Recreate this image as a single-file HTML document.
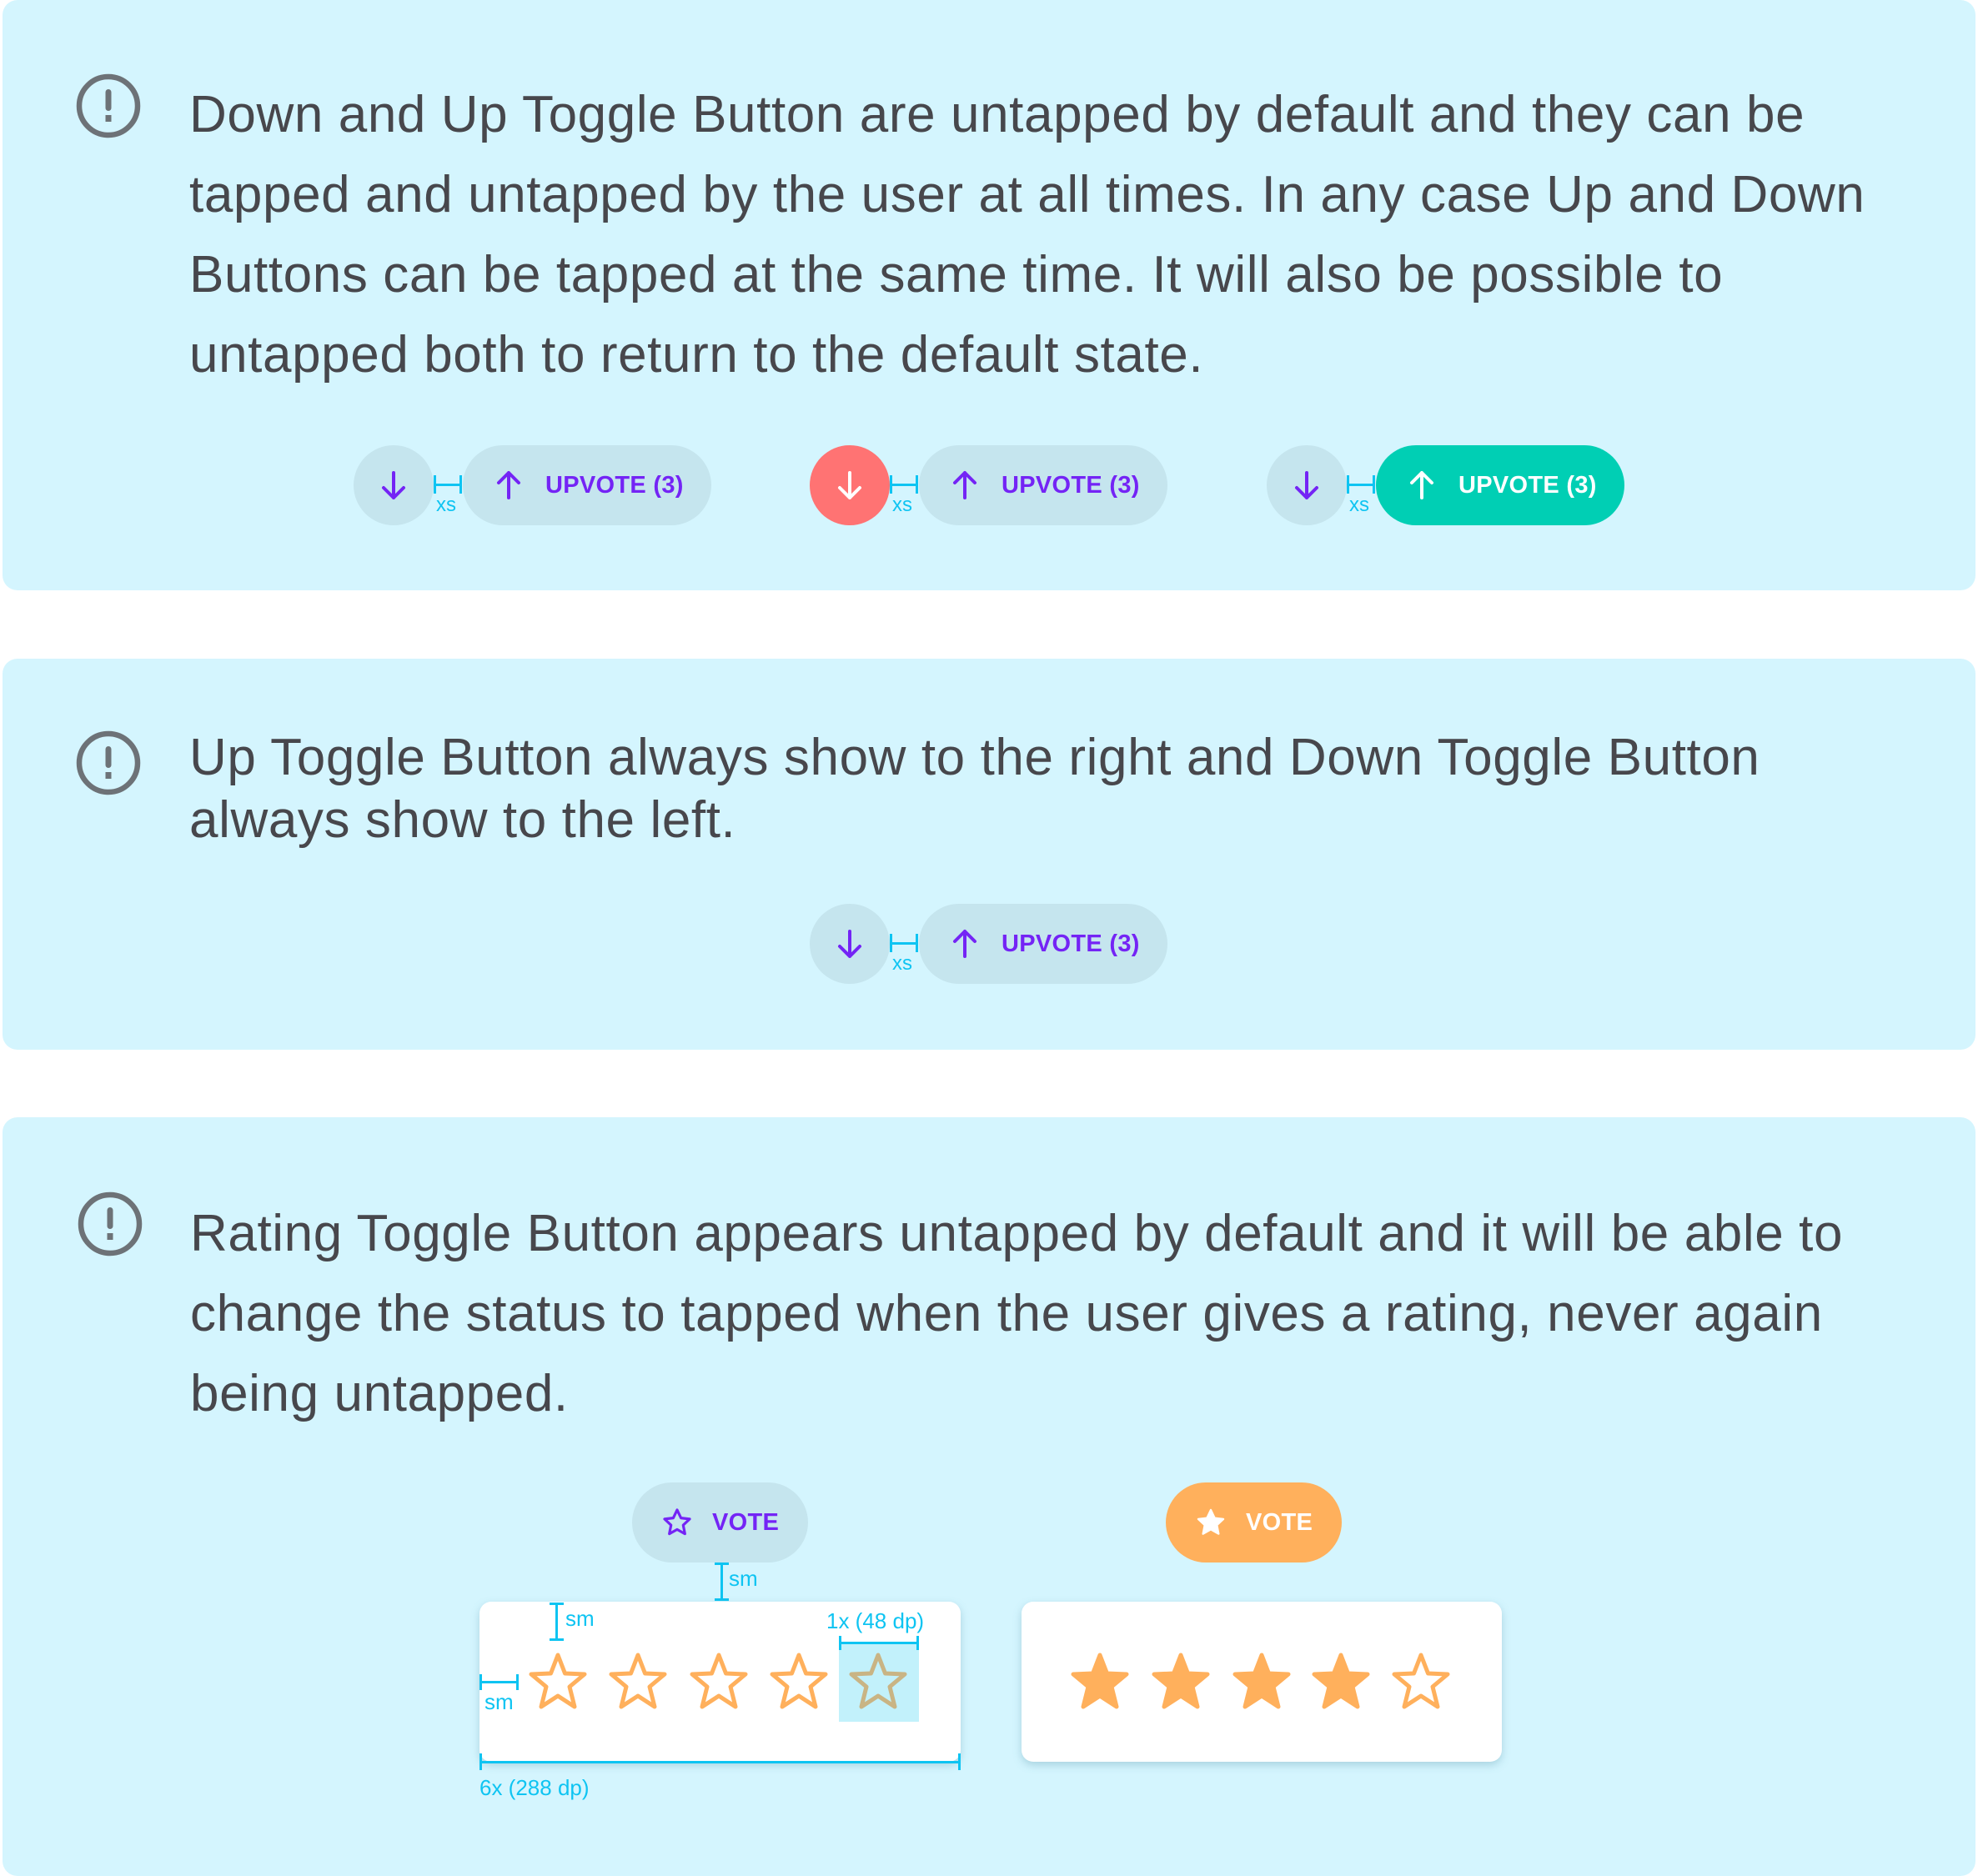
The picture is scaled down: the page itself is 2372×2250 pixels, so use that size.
<!DOCTYPE html>
<html><head><meta charset="utf-8"><style>
*{margin:0;padding:0;box-sizing:border-box}
body{width:2372px;height:2242px;background:#fff;position:relative;overflow:hidden;font-family:"Liberation Sans",sans-serif}
.panel{position:absolute;left:3px;width:2366px;background:#d4f5fe;border-radius:18px}
.ab{position:absolute}
.txt{position:absolute;left:227px;color:#47474c;font-size:62px;letter-spacing:0.6px;white-space:nowrap}
.circ{position:absolute;width:96px;height:96px;border-radius:50%;background:#c5e5ee}
.pill{position:absolute;width:298px;height:96px;border-radius:48px;background:#c5e5ee;color:#7424f5;font-size:29px;font-weight:bold;letter-spacing:0.3px}
.pill span{position:absolute;left:99px;top:32px}
.xs{position:absolute;color:#0ec4f2;font-size:24px}
.card{position:absolute;background:#fff;border-radius:14px;box-shadow:0 4px 10px rgba(90,150,170,.35)}
.ann{position:absolute;color:#0ec4f2;font-size:26px;white-space:nowrap}
.ln{position:absolute;background:#0ec4f2}
</style></head><body>

<div class="panel" style="top:0;height:708px"></div>
<div class="panel" style="top:790px;height:469px"></div>
<div class="panel" style="top:1340px;height:910px"></div>

<svg class="ab" style="left:90px;top:87px" width="80" height="80" viewBox="0 0 80 80"><circle cx="40" cy="40" r="35" fill="none" stroke="#6d7277" stroke-width="6.5"/><rect x="36.5" y="20" width="7" height="26" rx="3.5" fill="#6d7277"/><rect x="36.5" y="51" width="7" height="8" fill="#6d7277"/></svg>
<svg class="ab" style="left:90px;top:875px" width="80" height="80" viewBox="0 0 80 80"><circle cx="40" cy="40" r="35" fill="none" stroke="#6d7277" stroke-width="6.5"/><rect x="36.5" y="20" width="7" height="26" rx="3.5" fill="#6d7277"/><rect x="36.5" y="51" width="7" height="8" fill="#6d7277"/></svg>
<svg class="ab" style="left:92px;top:1428px" width="80" height="80" viewBox="0 0 80 80"><circle cx="40" cy="40" r="35" fill="none" stroke="#6d7277" stroke-width="6.5"/><rect x="36.5" y="20" width="7" height="26" rx="3.5" fill="#6d7277"/><rect x="36.5" y="51" width="7" height="8" fill="#6d7277"/></svg>

<div class="txt" style="top:90px;line-height:96px">Down and Up Toggle Button are untapped by default and they can be<br>tapped and untapped by the user at all times. In any case Up and Down<br>Buttons can be tapped at the same time. It will also be possible to<br>untapped both to return to the default state.</div>
<div class="txt" style="top:871px;line-height:75px">Up Toggle Button always show to the right and Down Toggle Button<br>always show to the left.</div>
<div class="txt" style="top:1432px;left:228px;line-height:96px">Rating Toggle Button appears untapped by default and it will be able to<br>change the status to tapped when the user gives a rating, never again<br>being untapped.</div>

<div class="circ" style="left:424px;top:534px"><svg width="96" height="96" viewBox="0 0 96 96"><path d="M48 33v30M36 51l12 12 12-12" fill="none" stroke="#7424f5" stroke-width="4" stroke-linecap="round" stroke-linejoin="round"/></svg></div>
<div class="ln" style="left:520px;top:580px;width:34px;height:3px"></div><div class="ln" style="left:520px;top:570px;width:3px;height:22px"></div><div class="ln" style="left:551px;top:570px;width:3px;height:22px"></div>
<div class="xs" style="left:523px;top:592px">xs</div>
<div class="pill" style="left:555px;top:534px"><svg class="ab" style="left:31px;top:24px" width="48" height="48" viewBox="0 0 48 48"><path d="M24 39V9M12 21l12-12 12 12" fill="none" stroke="#7424f5" stroke-width="4" stroke-linecap="round" stroke-linejoin="round"/></svg><span>UPVOTE (3)</span></div>

<div class="circ" style="left:971px;top:534px;background:#ff7373"><svg width="96" height="96" viewBox="0 0 96 96"><path d="M48 33v30M36 51l12 12 12-12" fill="none" stroke="#fff" stroke-width="4" stroke-linecap="round" stroke-linejoin="round"/></svg></div>
<div class="ln" style="left:1067px;top:580px;width:34px;height:3px"></div><div class="ln" style="left:1067px;top:570px;width:3px;height:22px"></div><div class="ln" style="left:1098px;top:570px;width:3px;height:22px"></div>
<div class="xs" style="left:1070px;top:592px">xs</div>
<div class="pill" style="left:1102px;top:534px"><svg class="ab" style="left:31px;top:24px" width="48" height="48" viewBox="0 0 48 48"><path d="M24 39V9M12 21l12-12 12 12" fill="none" stroke="#7424f5" stroke-width="4" stroke-linecap="round" stroke-linejoin="round"/></svg><span>UPVOTE (3)</span></div>

<div class="circ" style="left:1519px;top:534px"><svg width="96" height="96" viewBox="0 0 96 96"><path d="M48 33v30M36 51l12 12 12-12" fill="none" stroke="#7424f5" stroke-width="4" stroke-linecap="round" stroke-linejoin="round"/></svg></div>
<div class="ln" style="left:1615px;top:580px;width:34px;height:3px"></div><div class="ln" style="left:1615px;top:570px;width:3px;height:22px"></div><div class="ln" style="left:1646px;top:570px;width:3px;height:22px"></div>
<div class="xs" style="left:1618px;top:592px">xs</div>
<div class="pill" style="left:1650px;top:534px;background:#00cfb4;color:#fff"><svg class="ab" style="left:31px;top:24px" width="48" height="48" viewBox="0 0 48 48"><path d="M24 39V9M12 21l12-12 12 12" fill="none" stroke="#fff" stroke-width="4" stroke-linecap="round" stroke-linejoin="round"/></svg><span>UPVOTE (3)</span></div>

<div class="circ" style="left:971px;top:1084px"><svg width="96" height="96" viewBox="0 0 96 96"><path d="M48 33v30M36 51l12 12 12-12" fill="none" stroke="#7424f5" stroke-width="4" stroke-linecap="round" stroke-linejoin="round"/></svg></div>
<div class="ln" style="left:1067px;top:1130px;width:34px;height:3px"></div><div class="ln" style="left:1067px;top:1120px;width:3px;height:22px"></div><div class="ln" style="left:1098px;top:1120px;width:3px;height:22px"></div>
<div class="xs" style="left:1070px;top:1142px">xs</div>
<div class="pill" style="left:1102px;top:1084px"><svg class="ab" style="left:31px;top:24px" width="48" height="48" viewBox="0 0 48 48"><path d="M24 39V9M12 21l12-12 12 12" fill="none" stroke="#7424f5" stroke-width="4" stroke-linecap="round" stroke-linejoin="round"/></svg><span>UPVOTE (3)</span></div>

<div class="pill" style="left:758px;top:1778px;width:211px"><svg class="ab" style="left:35px;top:29px" width="38" height="38" viewBox="0 0 24 24"><path d="M12 2.5l2.9 6.1 6.6.8-4.9 4.6 1.3 6.6L12 17.3l-5.9 3.3 1.3-6.6L2.5 9.4l6.6-.8z" fill="none" stroke="#7424f5" stroke-width="2" stroke-linejoin="round"/></svg><span style="left:96px">VOTE</span></div>
<div class="pill" style="left:1398px;top:1778px;width:211px;background:#ffb05c;color:#fff"><svg class="ab" style="left:35px;top:29px" width="38" height="38" viewBox="0 0 24 24"><path d="M12 2.5l2.9 6.1 6.6.8-4.9 4.6 1.3 6.6L12 17.3l-5.9 3.3 1.3-6.6L2.5 9.4l6.6-.8z" fill="#fff" stroke="#fff" stroke-width="1.5" stroke-linejoin="round"/></svg><span style="left:96px">VOTE</span></div>

<div class="ln" style="left:864px;top:1874px;width:3px;height:46px"></div><div class="ln" style="left:857px;top:1874px;width:17px;height:3px"></div><div class="ln" style="left:857px;top:1917px;width:17px;height:3px"></div>
<div class="ann" style="left:874px;top:1878px">sm</div>

<div class="card" style="left:575px;top:1921px;width:577px;height:192px"></div>
<div class="card" style="left:1225px;top:1921px;width:576px;height:192px"></div>
<div class="ab" style="left:1006px;top:1972px;width:96px;height:93px;background:#c2f1fb"></div>

<svg class="ab" style="left:575px;top:1921px" width="577" height="192" viewBox="0 0 577 192">
<defs><path id="st" d="M0 -33 L8.5 -11 L32 -10 L14 5 L20 29 L0 16 L-20 29 L-14 5 L-32 -10 L-8.5 -11 Z"/></defs>
<g fill="none" stroke="#ffb05c" stroke-width="5" stroke-linejoin="round">
<use href="#st" x="94" y="97"/><use href="#st" x="190" y="97"/><use href="#st" x="287" y="97"/><use href="#st" x="383" y="97"/>
<use href="#st" x="478" y="97" stroke="#c9b484"/></g>
</svg>
<svg class="ab" style="left:1225px;top:1921px" width="576" height="192" viewBox="0 0 576 192">
<defs><path id="st2" d="M0 -33 L8.5 -11 L32 -10 L14 5 L20 29 L0 16 L-20 29 L-14 5 L-32 -10 L-8.5 -11 Z"/></defs>
<g fill="#ffb05c" stroke="#ffb05c" stroke-width="5" stroke-linejoin="round">
<use href="#st2" x="94" y="97"/><use href="#st2" x="191" y="97"/><use href="#st2" x="288" y="97"/><use href="#st2" x="383" y="97"/>
<use href="#st2" x="479" y="97" fill="none"/></g>
</svg>

<div class="ln" style="left:666px;top:1922px;width:3px;height:46px"></div><div class="ln" style="left:659px;top:1922px;width:17px;height:3px"></div><div class="ln" style="left:659px;top:1965px;width:17px;height:3px"></div>
<div class="ann" style="left:678px;top:1926px">sm</div>
<div class="ann" style="left:991px;top:1929px">1x (48 dp)</div>
<div class="ln" style="left:1006px;top:1969px;width:96px;height:3px"></div><div class="ln" style="left:1006px;top:1962px;width:3px;height:17px"></div><div class="ln" style="left:1099px;top:1962px;width:3px;height:17px"></div>
<div class="ln" style="left:575px;top:2016px;width:47px;height:3px"></div><div class="ln" style="left:575px;top:2008px;width:3px;height:19px"></div><div class="ln" style="left:619px;top:2008px;width:3px;height:19px"></div>
<div class="ann" style="left:581px;top:2026px">sm</div>
<div class="ln" style="left:575px;top:2112px;width:577px;height:3px"></div><div class="ln" style="left:575px;top:2103px;width:3px;height:20px"></div><div class="ln" style="left:1149px;top:2103px;width:3px;height:20px"></div>
<div class="ann" style="left:575px;top:2129px">6x (288 dp)</div>

</body></html>
